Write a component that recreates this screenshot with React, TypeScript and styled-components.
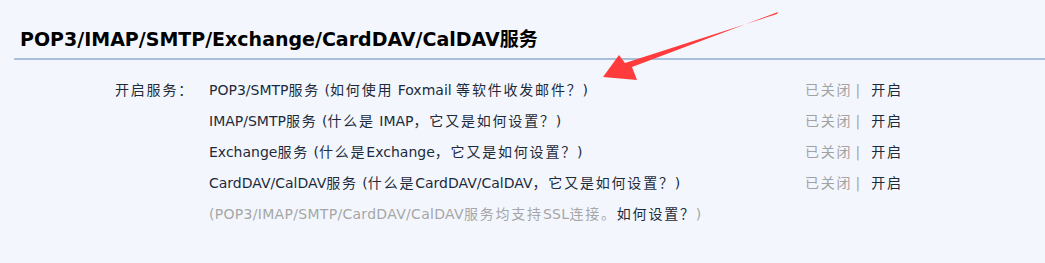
import styled, { createGlobalStyle } from 'styled-components';

const GlobalStyle = createGlobalStyle`
    html, body {
        margin: 0;
        padding: 0;
        background: #f3f7fd;
    }
    body {
        font-family: "DejaVu Sans", "Noto Sans CJK SC", sans-serif;
    }
`;

const services = [
    { name: 'POP3/SMTP服务', help: ' (如何使用 Foxmail 等软件收发邮件？)' },
    { name: 'IMAP/SMTP服务', help: ' (什么是 IMAP，它又是如何设置？)' },
    { name: 'Exchange服务', help: ' (什么是Exchange，它又是如何设置？)' },
    { name: 'CardDAV/CalDAV服务', help: ' (什么是CardDAV/CalDAV，它又是如何设置？)' },
];

// chinese runs are set a little wider than the latin text around them
const hanRe = /([\u3000-\u303f\u4e00-\u9fff\uff00-\uffef]+)/;

function Txt({ children }: { children: string }) {
    return (
        <>
            {children.split(hanRe).map((part, i) =>
                i % 2 === 1 ? <Han key={i}>{part}</Han> : part
            )}
        </>
    );
}

function App() {
    return (
        <Page>
            <GlobalStyle />
            <Title>POP3/IMAP/SMTP/Exchange/CardDAV/CalDAV服务</Title>
            <Section>
                <Label><Txt>开启服务：</Txt></Label>
                <List>
                    {services.map((s) => (
                        <Row key={s.name}>
                            <Name>
                                <Txt>{s.name}</Txt>
                                <Txt>{s.help}</Txt>
                            </Name>
                            <Status>
                                <Off><Txt>已关闭</Txt></Off>
                                <Sep>|</Sep>
                                <Action><Txt>开启</Txt></Action>
                            </Status>
                        </Row>
                    ))}
                    <Note>
                        <Txt>(POP3/IMAP/SMTP/CardDAV/CalDAV服务均支持SSL连接。</Txt>
                        <NoteLink><Txt>如何设置？</Txt></NoteLink>)
                    </Note>
                </List>
            </Section>
            <Arrow viewBox="0 0 1045 263" aria-hidden="true">
                <polygon points="778,12 632,67 637,80 603,77 619,55 625,63 777,14" fill="#ff3b3b" />
            </Arrow>
        </Page>
    );
}

const Page = styled.div`
    position: relative;
    width: 1045px;
    height: 263px;
    overflow: hidden;
    padding-top: 28px;
    box-sizing: border-box;
`;

const Title = styled.h2`
    margin: 0 0 0 14px;
    padding: 0 0 8px 6px;
    font-size: 19px;
    font-weight: bold;
    line-height: 22px;
    color: #000;
    border-bottom: 2px solid #a8c0de;
`;

const Section = styled.div`
    display: flex;
    padding: 15px 0 0 115px;
    font-size: 14px;
    color: #1d2a3c;
`;

const Han = styled.span`
    letter-spacing: 1.8px;
`;

const Label = styled.div`
    width: 94px;
    line-height: 31px;
    height: 31px;
    white-space: nowrap;
`;

const List = styled.div`
    display: flex;
    flex-direction: column;
    width: 706px;
`;

const Row = styled.div`
    display: flex;
    justify-content: space-between;
    height: 31px;
    line-height: 31px;
`;

const Name = styled.div`
    white-space: pre;
`;

const Status = styled.div`
    display: flex;
    flex-shrink: 0;
    width: 110px;
    white-space: nowrap;
`;

const Off = styled.span`
    color: #a2a2a2;
`;

const Sep = styled.span`
    color: #a2a2a2;
    margin: 0 11px 0 3px;
`;

const Action = styled.span`
    color: #1d2a3c;
`;

const Note = styled.div`
    line-height: 31px;
    color: #a6a6a6;
    letter-spacing: 0.3px;
    white-space: nowrap;
`;

const NoteLink = styled.span`
    color: #1d2a3c;
`;

const Arrow = styled.svg`
    position: absolute;
    left: 0;
    top: 0;
    width: 1045px;
    height: 263px;
    pointer-events: none;
`;

export default App;
